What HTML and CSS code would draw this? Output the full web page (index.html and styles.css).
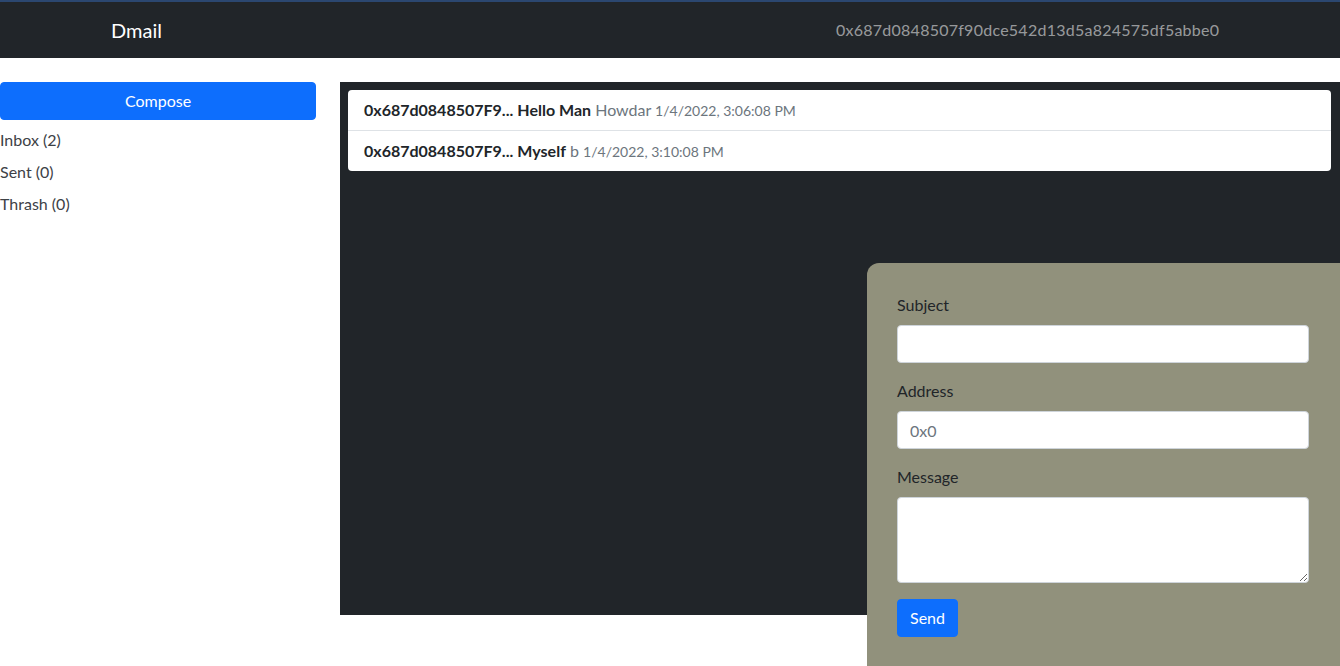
FILE: index.html
```html
<!DOCTYPE html>
<html lang="en">

<head>
  <meta charset="UTF-8">
  <meta name="viewport" content="width=device-width, initial-scale=1.0">
  <title>Dmail</title>
  <link rel="stylesheet" href="styles.css">
</head>

<body>
  <nav class="navbar">
    <div class="brand">Dmail</div>
    <div class="account">0x687d0848507f90dce542d13d5a824575df5abbe0</div>
  </nav>

  <div class="layout">
    <aside class="sidebar">
      <button class="btn btn-primary btn-block">Compose</button>
      <a class="folder" href="#">Inbox (2)</a>
      <a class="folder" href="#">Sent (0)</a>
      <a class="folder" href="#">Thrash (0)</a>
    </aside>

    <main class="mail-panel">
      <ul class="mail-list">
        <li class="mail-item">
          <b>0x687d0848507F9...</b> <b>Hello Man</b> <span class="muted">Howdar</span> <small class="muted">1/4/2022, 3:06:08 PM</small>
        </li>
        <li class="mail-item">
          <b>0x687d0848507F9...</b> <b>Myself</b> <span class="muted">b</span> <small class="muted">1/4/2022, 3:10:08 PM</small>
        </li>
      </ul>
    </main>
  </div>

  <form class="compose">
    <label class="form-label" for="subject">Subject</label>
    <input class="form-control" id="subject" type="text">
    <label class="form-label" for="address">Address</label>
    <input class="form-control" id="address" type="text" placeholder="0x0">
    <label class="form-label" for="message">Message</label>
    <textarea class="form-control message" id="message"></textarea>
    <button class="btn btn-primary" type="button">Send</button>
  </form>
</body>

</html>
```

FILE: styles.css
```css
:root {
  --dark: #212529;
  --primary: #0d6efd;
  --muted: #6c757d;
  --khaki: #91917c;
}

* {
  box-sizing: border-box;
}

body {
  margin: 0;
  font-family: Lato, "Open Sans", sans-serif;
  font-size: 16px;
  line-height: 1.5;
  color: var(--dark);
  background: #fff;
  overflow: hidden;
}

.navbar {
  height: 58px;
  background: var(--dark);
  border-top: 2px solid #2b4770;
  display: flex;
  align-items: center;
  padding-left: 111px;
}

.brand {
  color: #fff;
  font-size: 20px;
  width: 725px;
}

.account {
  color: rgba(255, 255, 255, 0.55);
  letter-spacing: 0.25px;
}

.layout {
  display: flex;
  gap: 24px;
  margin-top: 24px;
}

.sidebar {
  width: 316px;
  flex-shrink: 0;
  display: flex;
  flex-direction: column;
}

.btn {
  font-family: inherit;
  font-size: 16px;
  line-height: 24px;
  padding: 6px 12px;
  border: 1px solid transparent;
  border-radius: 4px;
  cursor: pointer;
}

.btn-primary {
  background: var(--primary);
  border-color: var(--primary);
  color: #fff;
}

.btn-block {
  width: 100%;
  margin-bottom: 4px;
}

.folder {
  color: #3d4146;
  text-decoration: none;
  line-height: 24px;
  padding: 4px 0;
}

.mail-panel {
  flex: 1;
  background: var(--dark);
  min-height: 80vh;
  padding: 8px 9px 8px 8px;
}

.mail-list {
  list-style: none;
  margin: 0;
  padding: 0;
  background: #fff;
  border-radius: 4px;
}

.mail-item {
  padding: 8px 16px;
  line-height: 24px;
  height: 40px;
}

.mail-item + .mail-item {
  border-top: 1px solid #dee2e6;
  height: 41px;
}

.mail-item b {
  font-weight: 700;
}

.muted {
  color: var(--muted);
}

small {
  font-size: 14px;
  line-height: 1;
}

.compose {
  position: fixed;
  right: 0;
  bottom: -1px;
  width: 473px;
  background: var(--khaki);
  border-top-left-radius: 12px;
  padding: 30px 31px 30px 30px;
  display: flex;
  flex-direction: column;
  align-items: flex-start;
}

.form-label {
  line-height: 24px;
  margin-bottom: 8px;
}

.form-control {
  width: 100%;
  height: 38px;
  padding: 6px 12px;
  margin-bottom: 16px;
  font-family: inherit;
  font-size: 16px;
  color: var(--dark);
  background: #fff;
  border: 1px solid #ced4da;
  border-radius: 4px;
}

.form-control::placeholder {
  color: var(--muted);
}

.message {
  height: 86px;
  resize: vertical;
}
```
